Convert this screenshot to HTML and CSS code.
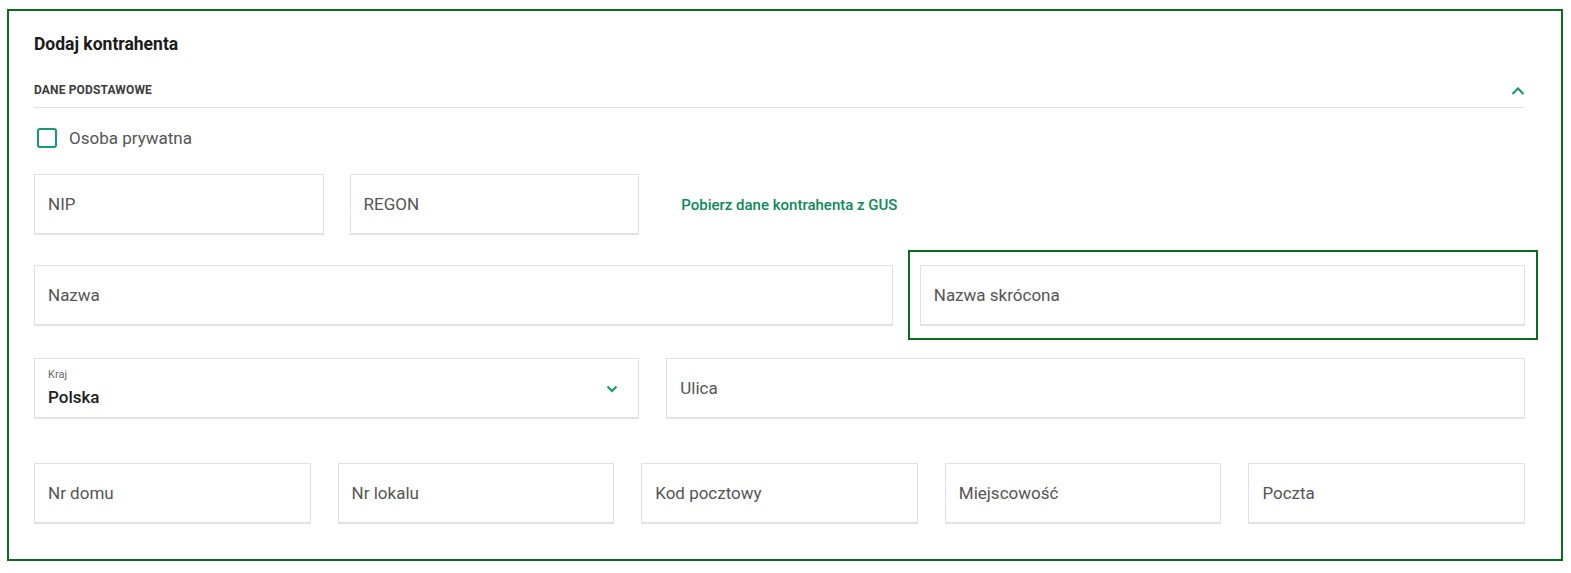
FILE: index.html
```html
<!DOCTYPE html>
<html lang="pl">
<head>
<meta charset="utf-8">
<title>Dodaj kontrahenta</title>
<link rel="stylesheet" href="styles.css">
</head>
<body>
<section class="card">
  <h1 class="title">Dodaj kontrahenta</h1>
  <div class="section-head">
    <span class="section-name">DANE PODSTAWOWE</span>
    <svg class="chev-up" width="14" height="8" viewBox="0 0 14 8"><path d="M1.5 7 L7 1.5 L12.5 7" fill="none" stroke="#0d9a6a" stroke-width="2"/></svg>
  </div>
  <label class="check-row">
    <span class="checkbox"></span>
    <span class="check-label">Osoba prywatna</span>
  </label>

  <div class="row row-a">
    <div class="pair">
      <div class="field"><span class="ph">NIP</span></div>
      <div class="field"><span class="ph">REGON</span></div>
    </div>
    <div class="link-cell"><a class="gus-link">Pobierz dane kontrahenta z GUS</a></div>
  </div>

  <div class="row row-b">
    <div class="field"><span class="ph">Nazwa</span></div>
    <div class="field focused"><span class="ph">Nazwa skrócona</span></div>
  </div>

  <div class="row row-c">
    <div class="field select">
      <div class="select-text">
        <span class="small-label">Kraj</span>
        <span class="value">Polska</span>
      </div>
      <svg class="chev-down" width="12" height="8" viewBox="0 0 12 8"><path d="M1.5 1.5 L6 6 L10.5 1.5" fill="none" stroke="#0d9a6a" stroke-width="2"/></svg>
    </div>
    <div class="field"><span class="ph">Ulica</span></div>
  </div>

  <div class="row row-d">
    <div class="field"><span class="ph">Nr domu</span></div>
    <div class="field"><span class="ph">Nr lokalu</span></div>
    <div class="field"><span class="ph">Kod pocztowy</span></div>
    <div class="field"><span class="ph">Miejscowość</span></div>
    <div class="field"><span class="ph">Poczta</span></div>
  </div>
</section>
</body>
</html>
```

FILE: styles.css
```css
* { box-sizing: border-box; }
html, body { margin: 0; padding: 0; background: #ffffff; }
body { font-family: Roboto, "Liberation Sans", sans-serif; color: #222; }

.card {
  margin: 9px 8px 12px 7px;
  border: 2px solid #0b6b1f;
  padding: 23px 36px 35px 25px;
  height: 552px;
}

.title {
  margin: 0;
  font-size: 17.5px;
  line-height: 20px;
  font-weight: 700;
  color: #1a1a1a;
}

.section-head {
  margin-top: 28px;
  height: 26px;
  display: flex;
  align-items: flex-start;
  justify-content: space-between;
  border-bottom: 1px solid #e0e0e0;
}
.section-name {
  font-size: 12px;
  line-height: 16px;
  font-weight: 700;
  color: #3c3c3c;
  letter-spacing: 0.15px;
}
.chev-up { margin-top: 5px; margin-right: 0; }

.check-row {
  margin-top: 20px;
  display: flex;
  align-items: center;
  height: 20px;
  padding-left: 3px;
}
.checkbox {
  width: 20px;
  height: 20px;
  border: 2px solid #15977a;
  border-radius: 3px;
}
.check-label {
  margin-left: 12px;
  font-size: 17px;
  color: #555;
}

.row { display: grid; column-gap: 27px; }
.row-a { margin-top: 26px; grid-template-columns: 604fr 857fr; }
.row-b { margin-top: 30px; grid-template-columns: 857fr 604fr; }
.row-c { margin-top: 32px; grid-template-columns: 604fr 857fr; }
.row-d { margin-top: 44px; grid-template-columns: repeat(5, 1fr); }

.pair { display: grid; grid-template-columns: 1fr 1fr; column-gap: 26px; }

.field {
  position: relative;
  height: 61px;
  border: 1px solid #e2e2e2;
  border-bottom-width: 2px;
  display: flex;
  align-items: center;
  padding-left: 13px;
  background: #fff;
}
.ph { font-size: 17px; color: #555; }

.focused::after {
  content: "";
  position: absolute;
  top: -16px;
  left: -13px;
  right: -14px;
  bottom: -16px;
  border: 2px solid #0b6b1f;
  pointer-events: none;
}

.link-cell { display: flex; align-items: center; padding-left: 15px; }
.gus-link {
  font-size: 15px;
  font-weight: 500;
  color: #0a8a5a;
  text-decoration: none;
}

.select { justify-content: space-between; padding-right: 20px; }
.select-text { display: flex; flex-direction: column; padding-top: 1px; }
.small-label { font-size: 11px; line-height: 14px; color: #666; }
.value { font-size: 17px; line-height: 24px; color: #1e1e1e; font-weight: 500; margin-top: 3px; }
.chev-down { margin-top: 2px; }
```
